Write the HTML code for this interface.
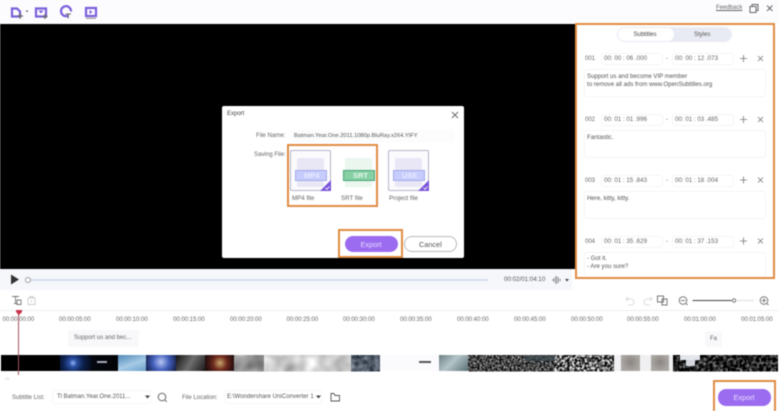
<!DOCTYPE html>
<html><head><meta charset="utf-8">
<style>
html,body{margin:0;padding:0;background:#fff}
#p{position:relative;width:779px;height:411px;overflow:hidden;background:#fff;font-family:"Liberation Sans",sans-serif;color:#555;filter:blur(.45px)}
#p div,#p span{position:absolute;white-space:nowrap;box-sizing:border-box}
.t{font-size:6px;color:#666;line-height:8px}
.s{font-size:6.1px;color:#555;line-height:8px}
.tm{font-size:6.2px;color:#666;line-height:8px}
.box{background:#fff;border-radius:3px;border:1px solid #f5f5f8}
.o{border:2px solid #e08d42}
svg{position:absolute;overflow:visible}
.f{top:354.5px;height:16.3px}
</style></head><body><div id="p">

<!-- top bar -->
<div style="left:0;top:0;width:779px;height:24px;background:#fcfcfe"></div>
<svg style="left:0;top:0" width="110" height="24" fill="none" stroke="#7b5fdc" stroke-width="2.2">
<path d="M12 8.500h5l3 3v5h-8z"/><path d="M17.500 16h5.500M20.200 13.300v5.500" stroke-width="1.200" stroke="#666"/><path d="M25.500 10.500h3l-1.500 1.800z" fill="#666" stroke="none"/>
<path d="M36 8.500h10v8h-10z"/><path d="M38.500 10.500h5l-2.500 3z" fill="#7b5fdc" stroke="none"/><path d="M42.500 16.500h5M45 14v5" stroke-width="1.200" stroke="#666"/>
<path d="M68.500 15.500a5 5 0 1 1 2.500-4"/><path d="M65.500 14h5.500M68.200 14v4.500" stroke-width="1.100" stroke="#666"/>
<path d="M86 8h10v8h-10z"/><path d="M89.500 10l3 2-3 2z" fill="#7b5fdc" stroke="none"/><path d="M86 18.300h10" stroke-width="1" stroke="#888"/>
</svg>
<span style="left:716px;top:4px;font-size:6px;line-height:9px;color:#666;text-decoration:underline">Feedback</span>
<svg style="left:749px;top:4px" width="28" height="10" fill="none" stroke="#666" stroke-width="1">
<path d="M1 2.500h6v6h-6zM3 2.500v-2h6v6h-2"/><path d="M18 1.500l5.500 5.500M23.500 1.500L18 7"/></svg>

<!-- video -->
<div style="left:0;top:24px;width:575px;height:245px;background:#000"></div>

<!-- control bar -->
<div style="left:0;top:269px;width:572px;height:21px;background:#f5f7fb"></div>
<svg style="left:10px;top:274px" width="12" height="12"><path d="M1 .5l8 5-8 5z" fill="#333"/></svg>
<div style="left:31px;top:279px;width:457px;height:1.500px;background:#d6dcea"></div>
<div style="left:25px;top:276.500px;width:6px;height:6px;border-radius:50%;border:1px solid #999;background:#fff"></div>
<span style="left:504px;top:275px;font-size:6.200px;line-height:9px;color:#555">00:02/01:04:10</span>
<svg style="left:551px;top:275px" width="20" height="10" fill="none" stroke="#777"><path d="M1 5h1M3 3v4M5 1v8M7 2v6M9 4v2"/><path d="M14 4h4l-2 2.500z" fill="#444" stroke="none"/></svg>

<!-- right panel -->
<div class="o" style="left:575px;top:23px;width:200px;height:256px;background:#fff"></div>
<div style="left:617px;top:27px;width:115px;height:15px;border-radius:8px;background:#e9ebf4"></div>
<div style="left:618px;top:28px;width:56px;height:13px;border-radius:7px;background:#fff"></div>
<span class="t" style="left:633.500px;top:31px;color:#444">Subtitles</span>
<span class="t" style="left:694px;top:31px;color:#555">Styles</span>

<span class="t" style="left:585px;top:55px">001</span>
<div class="box" style="left:601px;top:53px;width:62px;height:12px"></div>
<div class="box" style="left:672px;top:53px;width:62px;height:12px"></div>
<span class="tm" style="left:604px;top:55px">00: 00 : 06 .000</span><span class="t" style="left:666px;top:55px">-</span>
<span class="tm" style="left:675px;top:55px">00: 00 : 12 .073</span>
<div class="box" style="left:584px;top:69px;width:182px;height:28px"></div>
<span class="s" style="left:587px;top:73px">Support us and become VIP member</span>
<span class="s" style="left:587px;top:81px">to remove all ads from www.OpenSubtitles.org</span>

<span class="t" style="left:585px;top:116px">002</span>
<div class="box" style="left:601px;top:114px;width:62px;height:12px"></div>
<div class="box" style="left:672px;top:114px;width:62px;height:12px"></div>
<span class="tm" style="left:604px;top:116px">00: 01 : 01 .996</span><span class="t" style="left:666px;top:116px">-</span>
<span class="tm" style="left:675px;top:116px">00: 01 : 03 .485</span>
<div class="box" style="left:584px;top:130px;width:182px;height:28px"></div>
<span class="s" style="left:587px;top:133.500px">Fantastic.</span>

<span class="t" style="left:585px;top:177px">003</span>
<div class="box" style="left:601px;top:175px;width:62px;height:12px"></div>
<div class="box" style="left:672px;top:175px;width:62px;height:12px"></div>
<span class="tm" style="left:604px;top:177px">00: 01 : 15 .843</span><span class="t" style="left:666px;top:177px">-</span>
<span class="tm" style="left:675px;top:177px">00: 01 : 18 .004</span>
<div class="box" style="left:584px;top:191px;width:182px;height:28px"></div>
<span class="s" style="left:587px;top:194.500px">Here, kitty, kitty.</span>

<span class="t" style="left:585px;top:238px">004</span>
<div class="box" style="left:601px;top:236px;width:62px;height:12px"></div>
<div class="box" style="left:672px;top:236px;width:62px;height:12px"></div>
<span class="tm" style="left:604px;top:238px">00: 01 : 35 .629</span><span class="t" style="left:666px;top:238px">-</span>
<span class="tm" style="left:675px;top:238px">00: 01 : 37 .153</span>
<div class="box" style="left:584px;top:252px;width:182px;height:25px;border-bottom:0"></div>
<span class="s" style="left:587px;top:255px">- Got it.</span>
<span class="s" style="left:587px;top:263px">- Are you sure?</span>

<svg style="left:735px;top:54px" width="32" height="200" fill="none" stroke="#777" stroke-width=".8">
<path d="M5 4.500h7M8.500 1v7M23 2l5 5M28 2l-5 5"/>
<path d="M5 65.500h7M8.500 62v7M23 63l5 5M28 63l-5 5"/>
<path d="M5 126h7M8.500 122.500v7M23 123.500l5 5M28 123.500l-5 5"/>
<path d="M5 187h7M8.500 183.500v7M23 184.500l5 5M28 184.500l-5 5"/>
</svg>

<!-- dialog -->
<div style="left:222px;top:106px;width:242px;height:152px;background:#fff;border-radius:2px"></div>
<span class="t" style="left:227px;top:110px;color:#444">Export</span>
<svg style="left:451px;top:111px" width="9" height="9" fill="none" stroke="#666" stroke-width=".9"><path d="M1 1l6 6M7 1l-6 6"/></svg>
<span class="t" style="left:256px;top:132px;font-size:6.100px">File Name:</span>
<div style="left:291px;top:130px;width:163px;height:12px;background:#fcfcfd;border-radius:3px"></div>
<span class="t" style="left:294px;top:132px;font-size:5.700px;color:#555">Batman.Year.One.2011.1080p.BluRay.x264.YIFY</span>
<span class="t" style="left:254px;top:150.500px;font-size:6.100px">Saving File:</span>

<!-- MP4 card -->
<div style="left:290px;top:150px;width:41px;height:41px;border:1px solid #b6b3c6;border-radius:2px;background:#fbfbfe"></div>
<div style="left:297px;top:158px;width:27px;height:29px;background:#e9e7f5;border-radius:2px"></div>
<div style="left:295px;top:170px;width:32px;height:11px;background:#c6ccfb;border:1px solid #a4abe8"></div>
<span style="left:304px;top:171.500px;font-size:7.500px;line-height:8px;font-weight:bold;color:#e9ebff">MP4</span>
<svg style="left:320px;top:180px" width="11" height="11"><path d="M11 0v11H0z" fill="#7a55d8"/><path d="M5.500 8l1.500 1.200 2.500-2.700" stroke="#fff" fill="none" stroke-width=".9"/></svg>
<span class="t" style="left:292px;top:195px;font-size:6.200px">MP4 file</span>

<!-- SRT card -->
<div style="left:345px;top:158px;width:27px;height:29px;background:#eaf6ee;border-radius:2px"></div>
<div style="left:343px;top:170px;width:32px;height:11px;background:#86d0a4;border:1px solid #47a377"></div>
<span style="left:353px;top:171.500px;font-size:7.500px;line-height:8px;font-weight:bold;color:#e6f7ec">SRT</span>
<span class="t" style="left:341px;top:195px;font-size:6.200px">SRT file</span>

<!-- USE card -->
<div style="left:388px;top:150px;width:41px;height:41px;border:1px solid #b6b3c6;border-radius:2px;background:#fbfbfe"></div>
<div style="left:395px;top:158px;width:27px;height:29px;background:#e9e7f5;border-radius:2px"></div>
<div style="left:393px;top:170px;width:32px;height:11px;background:#c6ccfb;border:1px solid #a4abe8"></div>
<span style="left:402px;top:171.500px;font-size:7.500px;line-height:8px;font-weight:bold;color:#e9ebff">USE</span>
<svg style="left:418px;top:180px" width="11" height="11"><path d="M11 0v11H0z" fill="#7a55d8"/><path d="M5.500 8l1.500 1.200 2.500-2.700" stroke="#fff" fill="none" stroke-width=".9"/></svg>
<span class="t" style="left:389px;top:195px;font-size:6.200px">Project file</span>

<div class="o" style="left:287px;top:144px;width:91px;height:63px"></div>

<!-- dialog buttons -->
<div style="left:345px;top:235.500px;width:53px;height:16px;border-radius:8px;background:#9c6cf0"></div>
<span style="left:360.500px;top:239.500px;font-size:7.300px;line-height:9px;color:#e6dcff">Export</span>
<div style="left:404px;top:235.500px;width:53px;height:16px;border-radius:8px;background:#fff;border:1px solid #bbb"></div>
<span style="left:419px;top:239.500px;font-size:7.300px;line-height:9px;color:#555">Cancel</span>
<div class="o" style="left:338px;top:229px;width:65px;height:29px"></div>

<!-- toolbar -->
<svg style="left:11px;top:295px" width="28" height="11" fill="none" stroke="#777" stroke-width=".9">
<path d="M1 1.500h7M4.500 1.500v7M6 5h4v4.500H6zM3 8.500h3"/>
<path d="M17 3h7v6.500h-7zM19 3V1.500h3V3M20.500 5v2.500" stroke="#ccc"/></svg>
<svg style="left:624px;top:295px" width="150" height="12" fill="none" stroke="#ddd" stroke-width="1">
<path d="M4 2l-2 2 2 2M2 4h5a3 3 0 0 1 0 6H4"/>
<path d="M26 2l2 2-2 2M28 4h-5a3 3 0 0 0 0 6h3"/>
<g stroke="#777"><path d="M33.500 1h6v6h-6zM38 4h5v6h-5z"/>
<circle cx="59" cy="5.500" r="3.800"/><path d="M57 5.500h4M62 8.500l1.500 1.500"/>
<circle cx="140" cy="5.500" r="3.800"/><path d="M138 5.500h4M140 3.500v4M143 8.500l1.500 1.500"/>
<path d="M68.500 5.500h39" stroke="#444" stroke-width="1"/><circle cx="110" cy="5.500" r="1.700"/></g>
<path d="M112 5.500h18" stroke="#ddd"/></svg>

<!-- ruler -->
<div style="left:0;top:310px;width:779px;height:1px;background:#eceef3"></div>
<span class="t" style="left:2.500px;top:316px">00:00:00:00</span>
<span class="t" style="left:59px;top:316px">00:00:05:00</span>
<span class="t" style="left:116px;top:316px">00:00:10:00</span>
<span class="t" style="left:173px;top:316px">00:00:15:00</span>
<span class="t" style="left:230px;top:316px">00:00:20:00</span>
<span class="t" style="left:286.500px;top:316px">00:00:25:00</span>
<span class="t" style="left:343px;top:316px">00:00:30:00</span>
<span class="t" style="left:400px;top:316px">00:00:35:00</span>
<span class="t" style="left:457px;top:316px">00:00:40:00</span>
<span class="t" style="left:514px;top:316px">00:00:45:00</span>
<span class="t" style="left:571px;top:316px">00:00:50:00</span>
<span class="t" style="left:627px;top:316px">00:00:55:00</span>
<span class="t" style="left:684px;top:316px">00:01:00:00</span>
<span class="t" style="left:741px;top:316px">00:01:05:00</span>

<!-- captions -->
<div style="left:68px;top:330px;width:71px;height:17px;background:#f8f8fa;border-radius:2px"></div>
<span class="t" style="left:74px;top:334px;letter-spacing:.02px">Support us and bec...</span>
<div style="left:705px;top:331px;width:17px;height:16px;background:#f8f8fa;border-radius:2px"></div>
<span class="t" style="left:710px;top:334.500px">Fa</span>

<!-- filmstrip -->
<div class="f" style="left:1px;width:59px;background:#000"></div>
<div class="f" style="left:60px;width:58px;background:radial-gradient(circle at 13px 8px,#8fb2f5 0,#2a4ea0 4px,#0d2250 10px,#04070f 20px,#030407 100%)"></div>
<div style="left:97px;top:361px;width:10px;height:2px;background:#aab"></div>
<div class="f" style="left:118px;width:28px;background:linear-gradient(160deg,#4f87b6,#a6cbe6 55%,#6b9fc9)"></div>
<div class="f" style="left:146px;width:30px;background:radial-gradient(circle at 15px 7px,#b8c6f2 0,#4461bd 8px,#131c45 17px,#0a0d18 100%)"></div>
<div class="f" style="left:176px;width:29px;background:linear-gradient(120deg,#111,#6e6e6e 50%,#1c1a1a)"></div>
<div class="f" style="left:205px;width:29px;background:radial-gradient(circle at 15px 8px,#c9a66c 0,#6e2a1c 7px,#3a1514 12px,#140808 100%)"></div>
<svg style="left:0;top:354.500px" width="779" height="16.300">
<defs>
<filter id="c" x="0" y="0" width="100%" height="100%" color-interpolation-filters="sRGB"><feTurbulence type="fractalNoise" baseFrequency=".06" numOctaves="2" seed="4"/><feColorMatrix values=".6 0 0 0 .5 .6 0 0 0 .5 .6 0 0 0 .5 0 0 0 0 1"/></filter>
<filter id="g" x="0" y="0" width="100%" height="100%" color-interpolation-filters="sRGB"><feTurbulence type="fractalNoise" baseFrequency=".06" numOctaves="2" seed="9"/><feColorMatrix values=".6 0 0 0 .32 .6 0 0 0 .32 .6 0 0 0 .32 0 0 0 0 1"/></filter>
<filter id="b" x="0" y="0" width="100%" height="100%" color-interpolation-filters="sRGB"><feTurbulence type="fractalNoise" baseFrequency=".2" numOctaves="2" seed="6"/><feColorMatrix values=".6 0 0 0 .03 .6 0 0 0 .07 .6 0 0 0 .12 0 0 0 0 1"/></filter>
<filter id="d" x="0" y="0" width="100%" height="100%" color-interpolation-filters="sRGB"><feTurbulence type="fractalNoise" baseFrequency=".5" numOctaves="2" seed="3"/><feColorMatrix values="1.400 0 0 0 -.42 1.400 0 0 0 -.42 1.400 0 0 0 -.42 0 0 0 0 1"/></filter>
<filter id="m" x="0" y="0" width="100%" height="100%" color-interpolation-filters="sRGB"><feTurbulence type="fractalNoise" baseFrequency=".4" numOctaves="2" seed="8"/><feColorMatrix values="2.600 0 0 0 -.9 2.600 0 0 0 -.9 2.600 0 0 0 -.9 0 0 0 0 1"/></filter>
<filter id="k" x="0" y="0" width="100%" height="100%" color-interpolation-filters="sRGB"><feTurbulence type="fractalNoise" baseFrequency=".3" numOctaves="2" seed="12"/><feColorMatrix values="1.500 0 0 0 -.62 1.500 0 0 0 -.62 1.500 0 0 0 -.62 0 0 0 0 1"/></filter>
</defs>
<rect x="234" y="0" width="30" height="16.300" filter="url(#g)"/>
<rect x="264" y="0" width="87" height="16.300" filter="url(#c)"/>
<rect x="351" y="0" width="29" height="16.300" filter="url(#b)"/>
<rect x="468" y="0" width="87" height="16.300" filter="url(#d)"/>
<rect x="555" y="0" width="59" height="16.300" filter="url(#m)"/>
<rect x="673" y="0" width="105" height="16.300" filter="url(#k)"/>
</svg>
<div class="f" style="left:380px;width:59px;background:#fbfbfd"></div>
<div style="left:419px;top:361px;width:12px;height:1.500px;background:#555"></div>
<div class="f" style="left:439px;width:29px;background:linear-gradient(135deg,#6a7f82,#b4c4c8 45%,#5a7074)"></div>
<div class="f" style="left:525px;width:30px;height:6px;background:#3c4850;opacity:.7"></div>
<div class="f" style="left:614px;width:59px;background:#f0f0f2"></div>
<div class="f" style="left:621px;width:19px;background:radial-gradient(circle at 50% 45%,#8a8582,#aaa6a2 70%)"></div>
<div class="f" style="left:651px;width:18px;background:radial-gradient(circle at 50% 45%,#8a8582,#aaa6a2 70%)"></div>
<div style="left:680px;top:355px;width:20px;height:5px;background:#e3e6ec"></div>
<div style="left:686px;top:360px;width:9px;height:6px;background:#d4d8de"></div>

<!-- playhead -->
<div style="left:18px;top:312px;width:1px;height:63px;background:#a5525c"></div>
<svg style="left:15.500px;top:310px" width="6" height="5"><path d="M0 0h6v2L3 5 0 2z" fill="#c8324a"/></svg>
<span style="left:5px;top:376px;font-size:4px;line-height:5px;color:#ccc">00</span>

<!-- bottom bar -->
<span class="t" style="left:12px;top:393.500px">Subtitle List:</span>
<div class="box" style="left:52px;top:390px;width:99px;height:14px;border-color:#f6f6f8"></div>
<span class="t" style="left:57px;top:393px;color:#555">Tl Batman.Year.One.2011...</span>
<svg style="left:145px;top:395px" width="5" height="4"><path d="M0 .500h5L2.500 3.500z" fill="#444"/></svg>
<svg style="left:157px;top:392px" width="11" height="11" fill="none" stroke="#666"><circle cx="5" cy="5" r="3.800"/><path d="M8 8l1.800 1.800"/></svg>
<span class="t" style="left:182px;top:393.500px">File Location:</span>
<div class="box" style="left:224px;top:390px;width:98px;height:14px;border-color:#f6f6f8"></div>
<span class="t" style="left:227px;top:393px;color:#555;letter-spacing:.05px">E:\Wondershare UniConverter 1</span>
<svg style="left:316px;top:395px" width="5" height="4"><path d="M0 .500h5L2.500 3.500z" fill="#444"/></svg>
<svg style="left:330px;top:392px" width="11" height="10" fill="none" stroke="#555" stroke-width=".9"><path d="M1 2.500v6.500h8.500V3.500H5L4 1.500H1z"/></svg>

<div style="left:718px;top:389px;width:53px;height:16.500px;border-radius:8px;background:#9c6cf0"></div>
<span style="left:733.500px;top:393px;font-size:7.300px;line-height:9px;color:#e6dcff">Export</span>
<div class="o" style="left:713px;top:380px;width:63px;height:31px;border-bottom:0"></div>

</div></body></html>
